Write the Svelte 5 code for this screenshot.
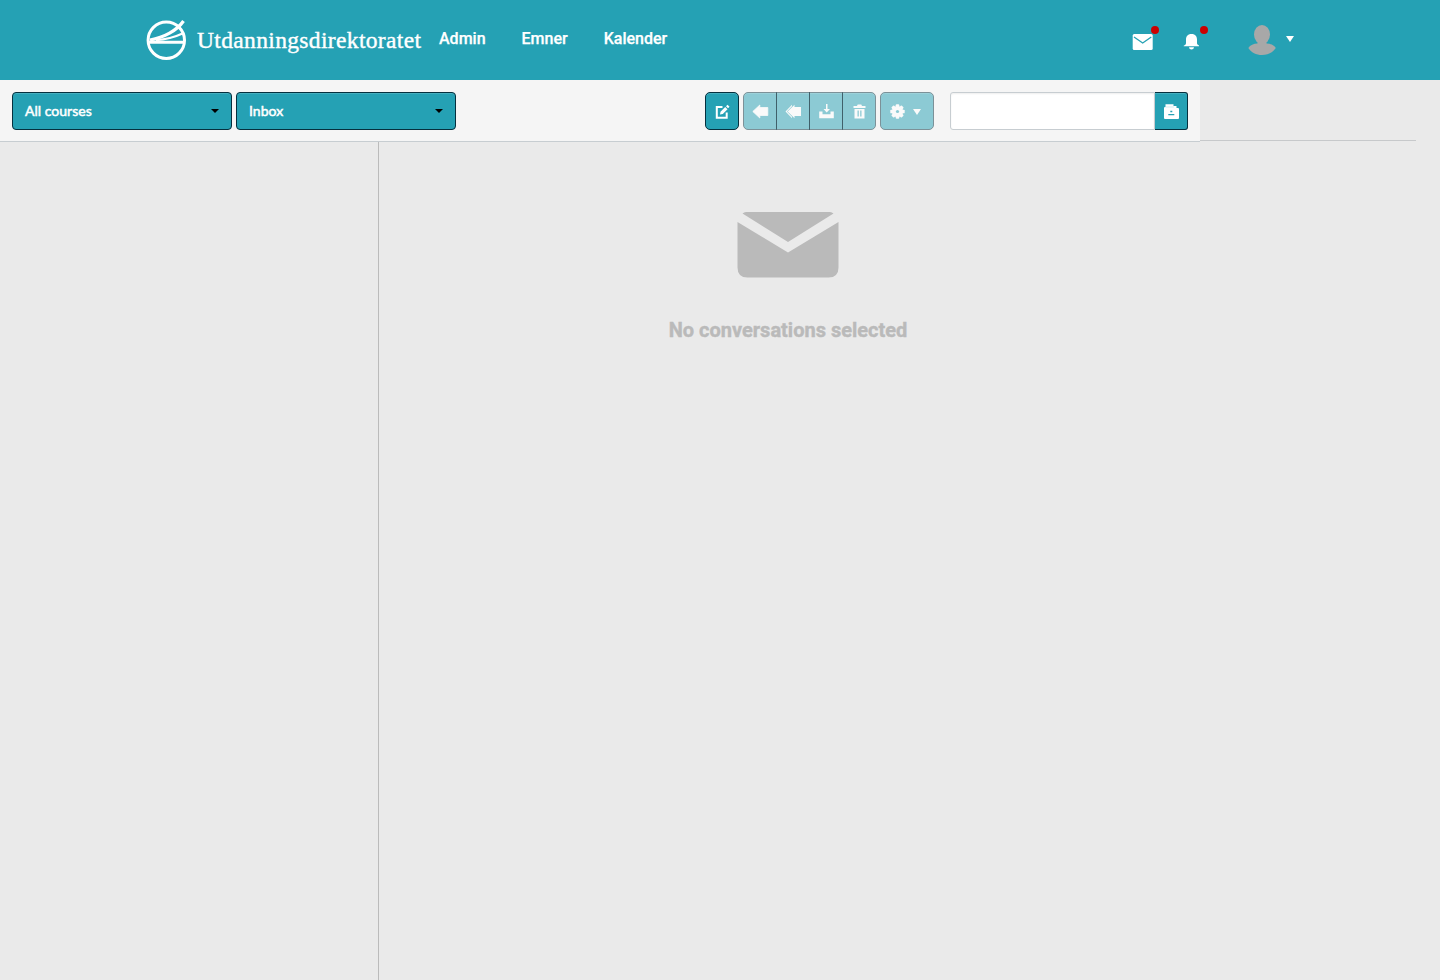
<script>
  const links = ['Admin', 'Emner', 'Kalender'];
  const filters = ['All courses', 'Inbox'];
  const actions = [
    { label: 'Reply', path: 'M.8 8.500 7.800 2v2.500h8v8H7.800V15Z' },
    { label: 'Reply all', path: 'M.5 8.500 7 1.700v1.600L2 8.500l5 5.200v1.600ZM2.600 8.500 9.500 1.700V4H16v9H9.500v2.300Z' },
    { label: 'Archive', path: 'M8 1h1.500v5H12L8.700 9.500 5.500 6H8ZM1.200 8.500H4.500v2.700h8V8.500h3.300V15.300H1.200Z' },
    { label: 'Delete', path: 'M2.500 3h3.500l.7-1.500h3.600L11 3h3.500v2h-12ZM3.500 6h10v9.500h-10ZM6.500 7.500v6H7.800v-6ZM9.200 7.500v6h1.300v-6Z' }
  ];
</script>

<header>
  <div class="brand">
    <svg class="mark" width="42" height="42" viewBox="0 0 42 42">
      <g fill="none" stroke="#fff">
        <circle cx="20.300" cy="21.200" r="18.200" stroke-width="3" />
        <path d="M3 23.200h35" stroke-width="2.900" />
        <path d="M4 21C18 18.500 31 11.500 37.500 2" stroke-width="3.200" />
        <path d="M10 21.200C20 20.500 28 18.500 36.500 14.500" stroke-width="2" />
      </g>
    </svg>
    <svg class="wordmark" width="226" height="34" viewBox="0 0 226 34">
      <text x="0" y="24.200" textLength="224" lengthAdjust="spacing">Utdanningsdirektoratet</text>
    </svg>
  </div>
  <nav>
    {#each links as link}<span>{link}</span>{/each}
  </nav>
  <div class="tools">
    <div class="notice mail">
      <svg width="21" height="16" viewBox="0 0 21 16"><rect x=".7" width="20" height="16" rx="1.500" fill="#fff" /><path d="m2 3 8.700 6 8.600-6" fill="none" stroke="#25a1b4" stroke-width="1.300" /></svg>
      <i></i>
    </div>
    <div class="notice bell">
      <svg width="16" height="16" viewBox="0 0 16 16" fill="#fff"><path d="M8.500 0C4.500 0 3 2.500 3 5.500V9c0 1.500-1 2-2.300 2.700V12.300h15.600V11.700C15 11 14 10.500 14 9V5.500C14 2.500 12.500 0 8.500 0ZM6 13.300h5c-.3 3-4.700 3-5 0Z" /></svg>
      <i></i>
    </div>
    <svg class="avatar" width="28" height="31" viewBox="0 0 28 31" fill="#a8a8a8"><ellipse cx="14" cy="9.500" rx="8" ry="9.500" /><path d="M9.500 16h9v2.500c4 .2 7.500 1.500 9.300 4.500-3 4.600-8 7-13.800 7S3.200 27.600.3 23c2-3 5.200-4.300 9.200-4.500Z" /></svg>
    <svg class="caret" width="8" height="6" viewBox="0 0 8 6"><path d="M0 0h8L4 6Z" fill="#fff" /></svg>
  </div>
</header>

<div class="strip">
  <div class="toolbar">
    <div class="filters">
      {#each filters as filter}
        <button class="select"><span>{filter}</span><svg width="8" height="4" viewBox="0 0 8 4"><path d="M0 0h8L4 4Z" /></svg></button>
      {/each}
    </div>
    <button class="square compose" aria-label="Compose">
      <svg width="15" height="15" viewBox="0 0 15 15"><path d="M7.500 3H1.800V13.700H11.700V8.500" fill="none" stroke="#fff" stroke-width="2" /><path d="m5 10.500.5-2.800 4.700-4.700 2.300 2.300-4.700 4.700ZM11 2.200 12.500.7l2 2L13 4.200Z" fill="#fff" /></svg>
    </button>
    <div class="group">
      {#each actions as action}
        <button aria-label={action.label}><svg width="17" height="16" viewBox="0 0 17 16"><path d={action.path} fill="#fff" fill-rule={action.label === 'Delete' ? 'evenodd' : 'nonzero'} stroke="#fff" stroke-width={action.label === 'Reply' ? 0.8 : 0} stroke-linejoin="round" /></svg></button>
      {/each}
    </div>
    <button class="settings" aria-label="Settings">
      <svg width="15" height="15" viewBox="-7.500 -7.500 15 15"><g fill="#fff">{#each [0, 45, 90, 135] as angle}<rect x="-1.800" y="-7.200" width="3.600" height="14.400" rx=".9" transform="rotate({angle})" />{/each}<circle r="5.600" /></g><circle r="1.600" fill="#25a1b4" /></svg>
      <svg width="8" height="6" viewBox="0 0 8 6"><path d="M0 0h8L4 6Z" fill="#fff" /></svg>
    </button>
    <div class="search">
      <input type="text" aria-label="Search" />
      <button aria-label="Address book"><svg width="15" height="15" viewBox="0 0 15 15"><path d="M1.500.3H9.500V2h3v2H14q1 0 1 1v9q0 1-1 1H1q-1 0-1-1V4q0-1 1-1h.5Z" fill="#fff" /><path d="M6.300 7.500h2M4.300 10.700h6" stroke="#25a1b4" stroke-width="1.300" /><path d="M1.500 3H10" stroke="#b5dfe5" stroke-width=".6" /></svg></button>
    </div>
  </div>
</div>

<main>
  <aside></aside>
  <section>
    <svg width="102" height="67" viewBox="0 0 102 67" fill="#bababa"><path d="M5.500 2.500Q7 1 9 1h84q2 0 3.500 1.500L51 31ZM.5 11 51 41.500 101.500 11V56.500q0 10-10 10h-81q-10 0-10-10Z" /></svg>
    <p>No conversations selected</p>
  </section>
</main>

<style>
  :global(body) { margin: 0; background: #eaeaea; overflow: hidden; font-family: Roboto, sans-serif; }
  header { height: 80px; background: #25a1b4; display: flex; box-sizing: border-box; padding: 0 146px; color: #fff; }
  .brand { display: flex; width: 293px; padding-top: 19px; box-sizing: border-box; }
  .wordmark { margin: 5px 0 0 9px; overflow: visible; }
  .wordmark text { font: 23.500px "Liberation Serif", serif; fill: #fff; stroke: #fff; stroke-width: .4px; }
  nav { display: flex; gap: 36px; padding-top: 29px; font-size: 16px; line-height: 20px; font-weight: 500; -webkit-text-stroke: .25px #fff; }
  .tools { margin-left: auto; display: flex; }
  .notice { position: relative; margin-top: 34px; height: 16px; }
  .notice svg, .avatar, .caret { display: block; }
  .notice i { position: absolute; width: 8px; height: 8px; border-radius: 50%; background: #c00; top: -8px; right: -5.500px; }
  .bell { margin-left: 30px; }
  .notice.bell i { right: -8.500px; }
  .avatar { margin: 25px 0 0 49px; }
  .caret { margin: 36px 0 0 10px; }
  .strip { height: 61px; width: 1416px; box-sizing: border-box; border-bottom: 1px solid #c7c9cb; }
  .toolbar { width: 1200px; height: 62px; box-sizing: border-box; padding: 12px; display: flex; background: #f5f5f5; border-bottom: 1px solid #c7cdd1; }
  .filters { display: flex; gap: 4px; margin-right: auto; }
  button { box-sizing: border-box; height: 38px; padding: 0; border: 1px solid #05303e; background: #25a1b4; color: #fff; display: flex; align-items: center; justify-content: center; box-shadow: inset 0 1px rgba(255, 255, 255, .15); }
  .select { width: 220px; border-radius: 4px; padding: 0 12px; justify-content: space-between; font: 400 14px Lato, sans-serif; -webkit-text-stroke: .5px #fff; letter-spacing: .02px; }
  .select span { padding-bottom: 2px; }
  .square { width: 34px; border-radius: 5px; }
  .group { display: flex; margin-left: 4px; }
  .group button { width: 34px; margin-right: -1px; opacity: .5; }
  .group button:first-child { border-radius: 5px 0 0 5px; }
  .group button:last-child { border-radius: 0 5px 5px 0; margin-right: 0; }
  .settings { width: 54px; border-radius: 5px; margin-left: 4px; gap: 8px; opacity: .5; padding: 1px 4px 0 0; }
  .search { display: flex; margin-left: 16px; }
  input { width: 205px; height: 38px; box-sizing: border-box; border: 1px solid #c7cdd1; border-radius: 3px 0 0 3px; padding: 0 8px; background: #fff; box-shadow: inset 0 1px 2px #eee; }
  .search button { width: 33px; border-left: 0; border-radius: 0 3px 3px 0; }
  main { height: 838px; display: flex; padding-top: 1px; }
  aside { width: 379px; box-sizing: border-box; border-right: 1px solid #bbb; }
  section { width: 818px; display: flex; flex-direction: column; align-items: center; padding-top: 69px; box-sizing: border-box; }
  p { margin: 40px 0 0; font-size: 20px; line-height: 24px; font-weight: 700; color: #bababa; -webkit-text-stroke: .4px #bababa; }
</style>
